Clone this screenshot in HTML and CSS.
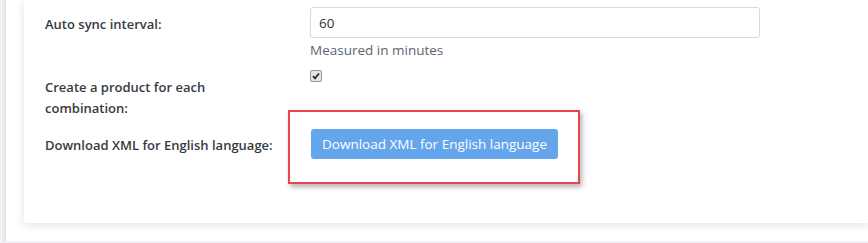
FILE: index.html
```html
<!DOCTYPE html>
<html lang="en">
<head>
  <meta charset="UTF-8" />
  <title>XML export settings</title>
  <link rel="stylesheet" href="styles.css">
</head>
<body>

<div class="page">
  <div class="panel">
    <form class="settings">
      <div class="row">
        <label class="row-label" for="interval">Auto sync interval:</label>
        <div class="row-control">
          <input type="text" id="interval" class="field" value="60" />
          <p class="help">Measured in minutes</p>
        </div>
      </div>

      <div class="row row-check">
        <label class="row-label" for="combo">Create a product for each combination:</label>
        <div class="row-control">
          <label class="check">
            <input type="checkbox" id="combo" checked />
            <svg width="8" height="8" viewBox="0 0 8 8"><path d="M1 4.2 L3 6.3 L7 1.5" fill="none" stroke="#2b2b2b" stroke-width="1.8"/></svg>
          </label>
        </div>
      </div>

      <div class="row row-center">
        <label class="row-label">Download XML for English language:</label>
        <div class="row-control">
          <!-- highlighted area -->
          <div class="highlight">
            <button type="button" class="btn-download">Download XML for English language</button>
          </div>
        </div>
      </div>
    </form>
  </div>
</div>

</body>
</html>
```

FILE: styles.css
```css
/* Page */
body {
  margin: 0;
  background: #eef0f4;
  font-family: 'Open Sans', 'Segoe UI', sans-serif;
  font-size: 13px;
  color: #333;
  overflow: hidden;
}

.page {
  margin-left: 6px;
  background: #fff;
  padding: 0 0 17px 18px;
  height: 224px;
  box-shadow: -1px 1px 2px rgba(180, 188, 200, 0.5);
}

/* Card */
.panel {
  background: #fff;
  height: 223px;
  box-shadow: 0 2px 9px rgba(160, 172, 196, 0.35);
  padding: 0 0 0 21px;
  box-sizing: border-box;
}

.settings {
  display: flex;
  flex-direction: column;
  padding-top: 7px;
}

/* Rows */
.row {
  display: grid;
  grid-template-columns: 250px 450px;
  column-gap: 15px;
}

.row-label {
  font-weight: 600;
  color: #363a42;
  line-height: 21px;
  padding: 7px 15px 0 0;
}

.row-check {
  margin-top: 10px;
}

.row-center {
  align-items: center;
  margin-top: -9px;
}

.row-center .row-label {
  padding-top: 0;
  margin-top: -4px;
}

/* Inputs */
.field {
  display: block;
  width: 100%;
  height: 31px;
  box-sizing: border-box;
  border: 1px solid #d6d9de;
  border-radius: 3px;
  padding: 0 8px;
  font-family: inherit;
  font-size: 13.5px;
  color: #333;
  background: #fff;
}

.help {
  margin: 2px 0 0;
  color: #5b6470;
  font-size: 13.5px;
  line-height: 20px;
}

.check {
  display: flex;
  align-items: center;
  justify-content: center;
  width: 12px;
  height: 12px;
  box-sizing: border-box;
  border: 1px solid #9a9a9a;
  border-radius: 2px;
  background: #e4e4e4;
}

.check input {
  display: none;
}

/* Highlighted download button */
.highlight {
  display: inline-block;
  margin-left: -22px;
  padding: 17px 20px 23px 21px;
  border: 2px solid #e8454a;
  box-shadow: 2px 3px 5px rgba(0, 0, 0, 0.3);
  background: #fff;
}

.btn-download {
  display: block;
  height: 30px;
  padding: 0 11px;
  border: none;
  border-radius: 3px;
  background: #64a5ec;
  color: #fff;
  font-family: inherit;
  font-size: 13.5px;
  cursor: pointer;
}
```
